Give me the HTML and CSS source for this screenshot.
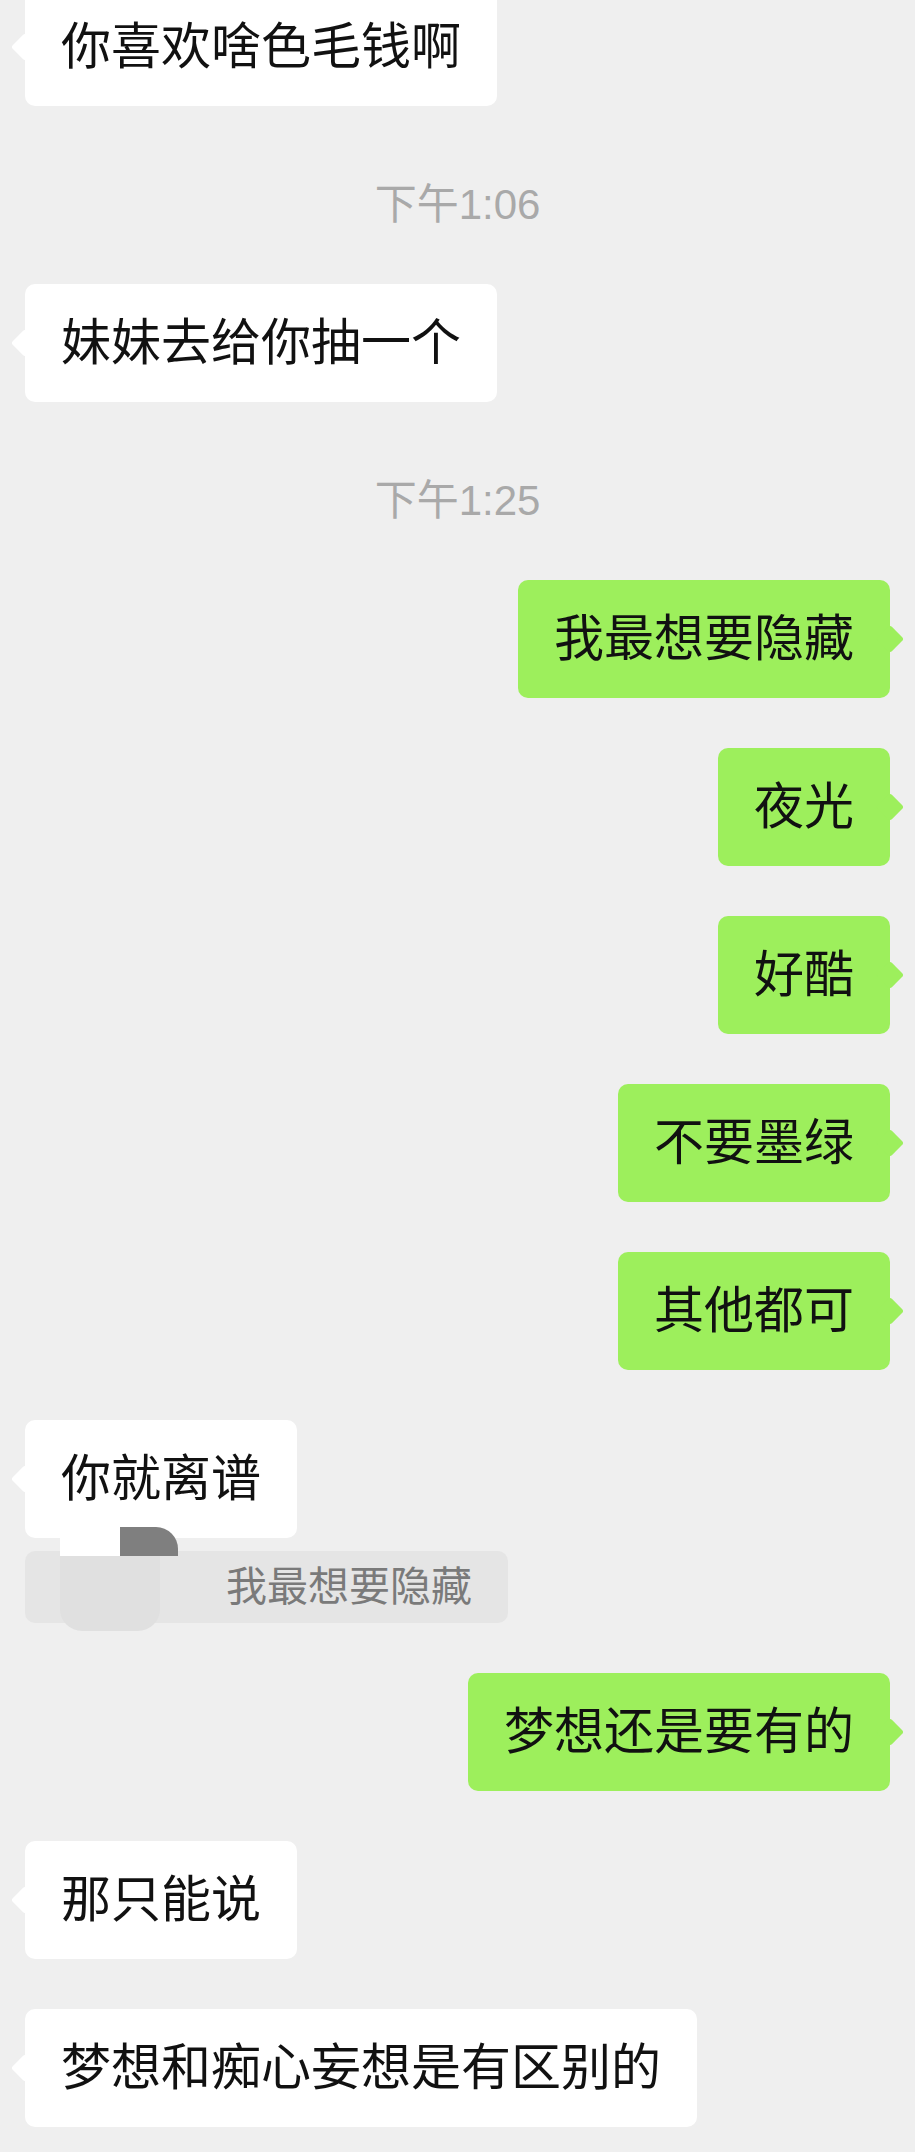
FILE: index.html
```html
<!DOCTYPE html>
<html lang="zh-CN">

<head>
    <meta charset="UTF-8">
    <meta name="viewport" content="width=device-width, initial-scale=1.0">
    <title>聊天记录</title>
    <link rel="stylesheet" href="styles.css">
</head>

<body>

    <div class="chat">
        <div class="msg left">
            <div class="bubble">你喜欢啥色毛钱啊</div>
        </div>

        <div class="time">下午1:06</div>

        <div class="msg left">
            <div class="bubble">妹妹去给你抽一个</div>
        </div>

        <div class="time">下午1:25</div>

        <div class="msg right">
            <div class="bubble">我最想要隐藏</div>
        </div>
        <div class="msg right">
            <div class="bubble">夜光</div>
        </div>
        <div class="msg right">
            <div class="bubble">好酷</div>
        </div>
        <div class="msg right">
            <div class="bubble">不要墨绿</div>
        </div>
        <div class="msg right">
            <div class="bubble">其他都可</div>
        </div>

        <!-- reply with quote, sender name blotted out -->
        <div class="msg left group">
            <div class="bubble">你就离谱</div>
            <div class="quote">
                <span class="blot blot-white"></span>
                <span class="blot blot-dark"></span>
                <span class="blot blot-grey"></span>
                我最想要隐藏
            </div>
        </div>

        <div class="msg right">
            <div class="bubble">梦想还是要有的</div>
        </div>

        <div class="msg left">
            <div class="bubble">那只能说</div>
        </div>
        <div class="msg left">
            <div class="bubble">梦想和痴心妄想是有区别的</div>
        </div>
    </div>

</body>

</html>
```

FILE: styles.css
```css
body {
    margin: 0;
    background-color: #efefef;
    font-family: "Liberation Sans", "Noto Sans CJK SC", sans-serif;
    color: #111;
    overflow: hidden;
}

.chat {
    display: flex;
    flex-direction: column;
    gap: 50px;
    margin-top: -12px;
    padding: 0 25px 21px;
}

.msg {
    display: flex;
}

.msg.right {
    justify-content: flex-end;
}

.msg.group {
    flex-direction: column;
    align-items: flex-start;
    gap: 13px;
}

.bubble {
    position: relative;
    background-color: #fff;
    border-radius: 10px;
    padding: 24px 36px;
    font-size: 50px;
    line-height: 70px;
    white-space: nowrap;
}

.bubble::before {
    content: "";
    position: absolute;
    top: 49px;
    width: 20px;
    height: 20px;
    background-color: inherit;
    border-radius: 3px;
    transform: rotate(45deg);
}

.left .bubble::before {
    left: -10px;
}

.right .bubble {
    background-color: #9def5c;
}

.right .bubble::before {
    right: -10px;
}

.time {
    margin: 25px 0 5px;
    text-align: center;
    font-size: 42px;
    line-height: 48px;
    color: #a9a9a9;
}

.quote {
    position: relative;
    width: 483px;
    box-sizing: border-box;
    height: 72px;
    padding: 0 36px 0 201px;
    background-color: #e5e5e5;
    border-radius: 10px;
    font-size: 41px;
    line-height: 72px;
    color: #7a7a7a;
    white-space: nowrap;
}

.blot {
    position: absolute;
}

.blot-white {
    left: 35px;
    top: -24px;
    width: 60px;
    height: 29px;
    background-color: #fff;
}

.blot-dark {
    left: 95px;
    top: -24px;
    width: 58px;
    height: 29px;
    background-color: #7f7f7f;
    border-top-right-radius: 22px;
}

.blot-grey {
    left: 35px;
    top: 5px;
    width: 100px;
    height: 75px;
    background-color: #e0e0e0;
    border-radius: 0 0 22px 22px;
}
```
